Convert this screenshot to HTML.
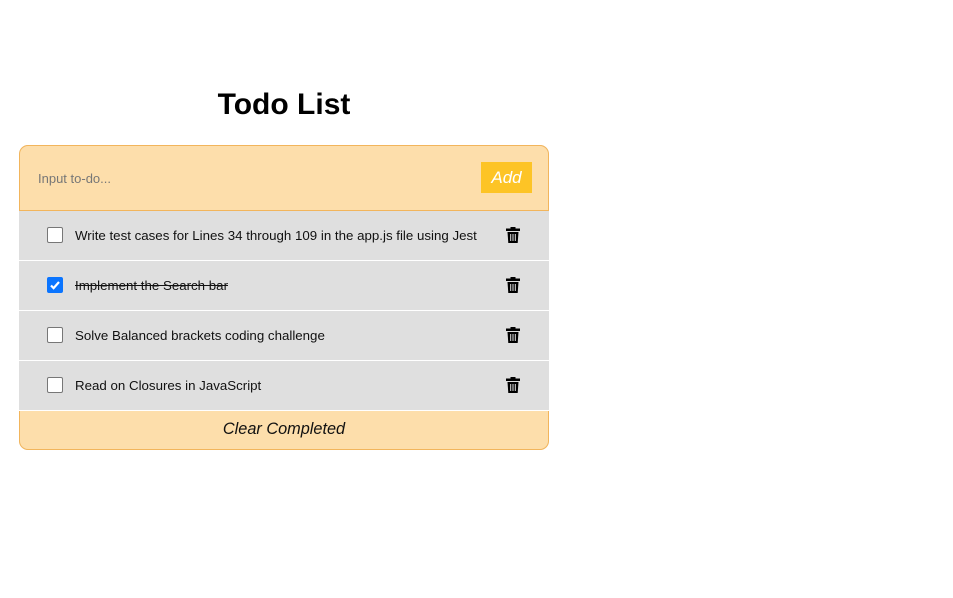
<!DOCTYPE html>
<html><head><style>
body{margin:0;background:#fff;font-family:"Liberation Sans",Arial,sans-serif;}
h1{position:absolute;left:0;width:568px;top:87px;margin:0;text-align:center;font-size:30px;font-weight:bold;line-height:35px;color:#000;}
.box{position:absolute;left:19px;top:145px;width:530px;height:305px;background:#dfdfdf;border-radius:9px;}
.hd{position:absolute;left:0;top:0;width:528px;height:64px;background:#fddeab;border:1px solid #f2b55c;border-radius:9px 9px 0 0;}
.ph{position:absolute;left:18px;top:25px;font-size:13px;color:#777;}
.add{position:absolute;left:461px;top:16px;width:51px;height:31px;background:#fdc426;color:#fff;font-style:italic;font-size:17px;line-height:31px;text-align:center;}
.row{position:absolute;left:0;width:530px;height:49px;background:#dfdfdf;border-bottom:1px solid #fff;}
.cb{position:absolute;left:28px;top:16px;width:14px;height:14px;border:1px solid #777;border-radius:2px;background:#fff;}
.cb.on{background:#0b75ff;border-color:#0b75ff;}
.t{position:absolute;left:56px;top:17px;font-size:13.3px;color:#111;}
.s{text-decoration:line-through;}
.tr{position:absolute;left:487px;top:16px;}
.ft{position:absolute;left:0;top:266px;width:528px;height:38px;background:#fddeab;border:1px solid #f2b55c;border-top:none;border-radius:0 0 9px 9px;text-align:center;font-style:italic;font-size:16.3px;line-height:36px;color:#111;}
</style></head><body>
<h1>Todo List</h1>
<div class="box">
<div class="hd"><span class="ph">Input to-do...</span><div class="add">Add</div></div>
<div class="row" style="top:66px"><div class="cb"></div><span class="t">Write test cases for Lines 34 through 109 in the app.js file using Jest</span><svg class="tr" width="14" height="16" viewBox="0 0 14 16"><rect x="0" y="1.5" width="14" height="2.5"/><rect x="4.5" y="0" width="5" height="2.5"/><path d="M1.5 5h11l-0.8 11h-9.4z"/><rect x="4.2" y="7" width="1" height="7" fill="#dfdfdf"/><rect x="6.5" y="7" width="1" height="7" fill="#dfdfdf"/><rect x="8.8" y="7" width="1" height="7" fill="#dfdfdf"/></svg></div>
<div class="row" style="top:116px"><div class="cb on"><svg width="14" height="14" viewBox="0 0 14 14"><path d="M3 7.5l2.6 2.6L11 4" stroke="#fff" stroke-width="2.2" fill="none"/></svg></div><span class="t s">Implement the Search bar</span><svg class="tr" width="14" height="16" viewBox="0 0 14 16"><rect x="0" y="1.5" width="14" height="2.5"/><rect x="4.5" y="0" width="5" height="2.5"/><path d="M1.5 5h11l-0.8 11h-9.4z"/><rect x="4.2" y="7" width="1" height="7" fill="#dfdfdf"/><rect x="6.5" y="7" width="1" height="7" fill="#dfdfdf"/><rect x="8.8" y="7" width="1" height="7" fill="#dfdfdf"/></svg></div>
<div class="row" style="top:166px"><div class="cb"></div><span class="t">Solve Balanced brackets coding challenge</span><svg class="tr" width="14" height="16" viewBox="0 0 14 16"><rect x="0" y="1.5" width="14" height="2.5"/><rect x="4.5" y="0" width="5" height="2.5"/><path d="M1.5 5h11l-0.8 11h-9.4z"/><rect x="4.2" y="7" width="1" height="7" fill="#dfdfdf"/><rect x="6.5" y="7" width="1" height="7" fill="#dfdfdf"/><rect x="8.8" y="7" width="1" height="7" fill="#dfdfdf"/></svg></div>
<div class="row" style="top:216px"><div class="cb"></div><span class="t">Read on Closures in JavaScript</span><svg class="tr" width="14" height="16" viewBox="0 0 14 16"><rect x="0" y="1.5" width="14" height="2.5"/><rect x="4.5" y="0" width="5" height="2.5"/><path d="M1.5 5h11l-0.8 11h-9.4z"/><rect x="4.2" y="7" width="1" height="7" fill="#dfdfdf"/><rect x="6.5" y="7" width="1" height="7" fill="#dfdfdf"/><rect x="8.8" y="7" width="1" height="7" fill="#dfdfdf"/></svg></div>
<div class="ft">Clear Completed</div>
</div>
</body></html>
